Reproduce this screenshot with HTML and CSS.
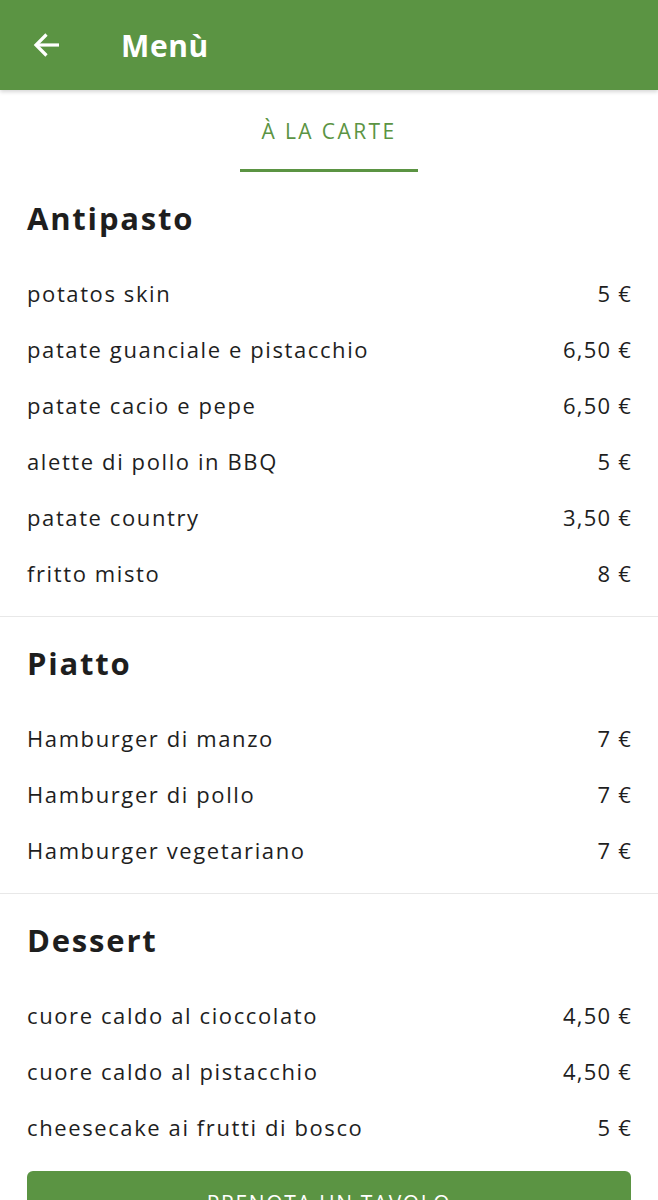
FILE: index.html
```html
<!DOCTYPE html>
<html lang="it">
  <head>
    <meta charset="UTF-8" />
    <link rel="stylesheet" href="styles.css">
  </head>
  <body>
    <header class="app-bar">
      <button class="back-btn" aria-label="Indietro">
        <svg width="28" height="28" viewBox="0 0 28 28" fill="none" stroke="#fff" stroke-width="3.2">
          <path d="M27 14H4" />
          <path d="M14.5 3.5L4 14l10.5 10.5" />
        </svg>
      </button>
      <h1 class="app-title">Menù</h1>
    </header>

    <nav class="tabs">
      <div class="tab active">À LA CARTE</div>
    </nav>

    <main>
      <section class="menu-section">
        <h2>Antipasto</h2>
        <div class="item"><span>potatos skin</span><span>5 €</span></div>
        <div class="item"><span>patate guanciale e pistacchio</span><span>6,50 €</span></div>
        <div class="item"><span>patate cacio e pepe</span><span>6,50 €</span></div>
        <div class="item"><span>alette di pollo in BBQ</span><span>5 €</span></div>
        <div class="item"><span>patate country</span><span>3,50 €</span></div>
        <div class="item"><span>fritto misto</span><span>8 €</span></div>
      </section>

      <section class="menu-section">
        <h2>Piatto</h2>
        <div class="item"><span>Hamburger di manzo</span><span>7 €</span></div>
        <div class="item"><span>Hamburger di pollo</span><span>7 €</span></div>
        <div class="item"><span>Hamburger vegetariano</span><span>7 €</span></div>
      </section>

      <section class="menu-section last">
        <h2>Dessert</h2>
        <div class="item"><span>cuore caldo al cioccolato</span><span>4,50 €</span></div>
        <div class="item"><span>cuore caldo al pistacchio</span><span>4,50 €</span></div>
        <div class="item"><span>cheesecake ai frutti di bosco</span><span>5 €</span></div>
      </section>

      <div class="cta-wrap">
        <button class="cta">PRENOTA UN TAVOLO</button>
      </div>
    </main>
  </body>
</html>
```

FILE: styles.css
```css
:root {
  --green: #5b9443;
  --text: #1e1e1e;
  --divider: #e8e8e8;
  --side: 27px;
}

body {
  margin: 0;
  font-family: "Open Sans", Lato, sans-serif;
  color: var(--text);
  background: #fff;
}

.app-bar {
  height: 90px;
  background: var(--green);
  display: flex;
  align-items: center;
  box-shadow: 0 2px 4px rgba(0, 0, 0, 0.16);
  position: relative;
  z-index: 1;
}

.back-btn {
  border: none;
  background: none;
  padding: 0;
  margin-left: 32px;
  width: 28px;
  height: 28px;
  display: flex;
}

.app-title {
  margin: 0 0 0 61px;
  color: #fff;
  font-size: 30px;
  font-weight: 700;
  letter-spacing: 0.6px;
}

.tabs {
  height: 82px;
  display: flex;
  justify-content: center;
}

.tab {
  width: 178px;
  display: flex;
  align-items: center;
  justify-content: center;
  color: var(--green);
  font-size: 21px;
  letter-spacing: 2.4px;
  border-bottom: 3px solid var(--green);
  box-sizing: border-box;
  padding-top: 2px;
}

.menu-section {
  padding: 26px var(--side) 14px;
  border-bottom: 1px solid var(--divider);
}

.menu-section.last {
  border-bottom: none;
  padding-bottom: 0;
}

.menu-section h2 {
  margin: 0 0 28px;
  height: 40px;
  line-height: 40px;
  font-size: 31px;
  font-weight: 700;
  letter-spacing: 1.8px;
}

.item {
  height: 56px;
  box-sizing: border-box;
  padding-bottom: 2px;
  display: flex;
  justify-content: space-between;
  align-items: center;
  font-size: 22px;
  letter-spacing: 1.6px;
}

.item span:last-child {
  letter-spacing: 1.2px;
  margin-right: -1px;
}

.cta-wrap {
  padding: 15px var(--side) 0;
}

.cta {
  width: 100%;
  height: 56px;
  border: none;
  border-radius: 6px;
  background: var(--green);
  color: #fff;
  font-family: inherit;
  font-size: 21px;
  font-weight: 500;
  letter-spacing: 1.6px;
  padding-top: 8px;
}
```
